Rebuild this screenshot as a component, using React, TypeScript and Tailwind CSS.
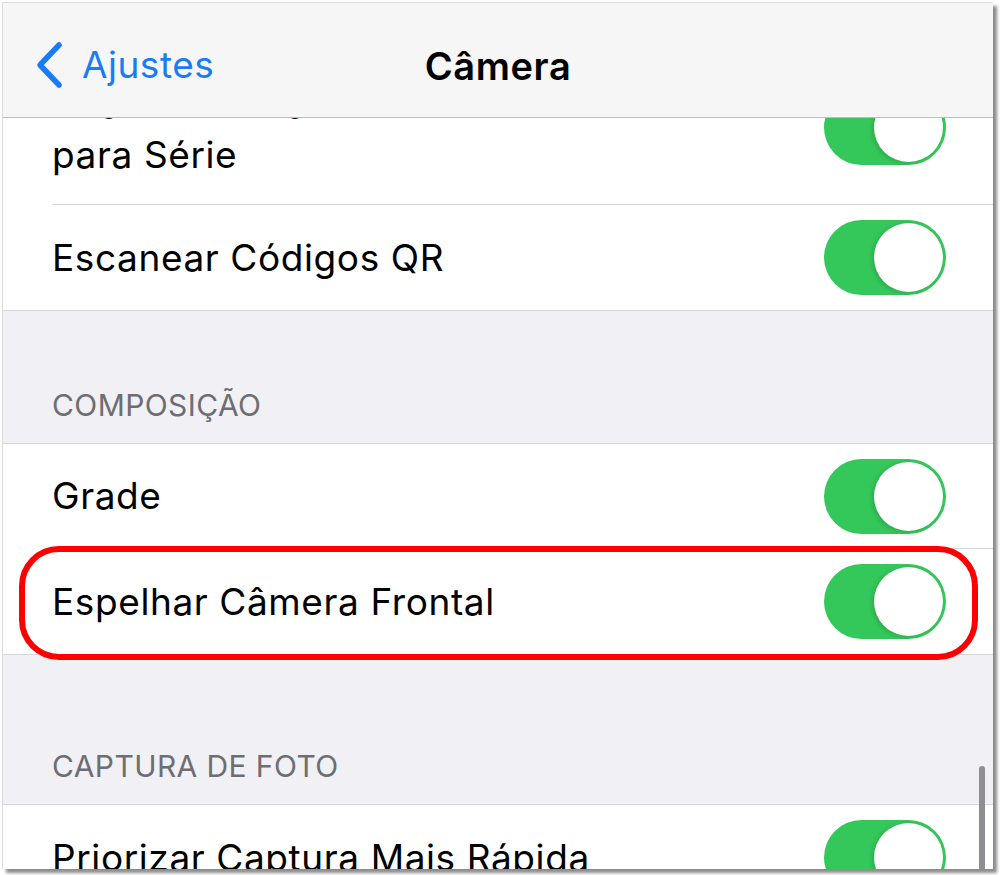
import React from 'react';

const Toggle: React.FC = () => (
  <div className="relative w-[122px] h-[75px] rounded-full bg-[#34c759] shrink-0">
    <div className="absolute right-[3px] top-[3px] w-[69px] h-[69px] rounded-full bg-white shadow-[-2px_1px_4px_rgba(0,0,0,0.15)]" />
  </div>
);

const Row: React.FC<{ children: React.ReactNode; last?: boolean; className?: string }> = ({ children, last, className }) => (
  <div className="pl-[49px] bg-white">
    <div className={`flex items-center justify-between pr-[47px] ${last ? '' : 'border-b border-[#d6d6da]'} ${className ?? 'h-[105px]'}`}>
      <div className="text-[37px] leading-[44px] tracking-[0.6px] text-black">{children}</div>
      <Toggle />
    </div>
  </div>
);

const SectionHeader: React.FC<{ title: string; height: string }> = ({ title, height }) => (
  <div className={`bg-[#f0f0f5] border-y border-[#d6d6da] flex items-end pl-[49px] pb-[15px] ${height}`}>
    <span className="text-[30px] text-[#6d6d72] tracking-[0.4px]">{title}</span>
  </div>
);

export default function App() {
  return (
    <div className="w-[1000px] h-[875px] bg-white" style={{ fontFamily: 'Inter, "Noto Sans", sans-serif' }}>
      <div className="relative ml-[2px] mt-[2px] w-[991px] h-[867px] border-l border-t border-[#dcdcdc] shadow-[4px_4px_3px_rgba(0,0,0,0.45)] overflow-hidden bg-[#f0f0f5] flex flex-col">
        {/* Nav bar */}
        <header className="h-[115px] shrink-0 bg-[#f6f6f6] border-b border-[#bdbdbd] flex items-center pt-[9px] relative z-10">
          <div className="flex items-center gap-[19px] pl-[30px] text-[#1a7cf5]">
            <svg width="30" height="48" viewBox="0 0 30 48" fill="none">
              <path d="M26 4 L7 24 L26 44" stroke="#1a7cf5" strokeWidth="5.5" strokeLinecap="round" strokeLinejoin="round" />
            </svg>
            <span className="text-[37px] tracking-[0.5px]">Ajustes</span>
          </div>
          <h1 className="absolute left-0 right-0 pt-[3px] text-center text-[38px] font-semibold tracking-[0.6px] text-black pointer-events-none">Câmera</h1>
        </header>

        {/* Scrolled list */}
        <main className="flex-1 overflow-hidden relative">
          <div className="-mt-[68px]">
            <Row className="h-[155px]">
              <div className="pt-[6px] leading-[50px]">
                <div>Usar Aumentar Volume</div>
                <div>para Série</div>
              </div>
            </Row>
            <Row last>Escanear Códigos QR</Row>
            <SectionHeader title="COMPOSIÇÃO" height="h-[134px]" />
            <Row>Grade</Row>
            <Row last>Espelhar Câmera Frontal</Row>
            <SectionHeader title="CAPTURA DE FOTO" height="h-[151px]" />
            <Row last>Priorizar Captura Mais Rápida</Row>
          </div>

          {/* Highlight */}
          <div className="absolute left-[16px] top-[428px] w-[959px] h-[114px] rounded-[40px] border-[6px] border-[#ff0000] pointer-events-none" />

          {/* Scroll indicator */}
          <div className="absolute right-[8px] top-[648px] w-[6px] h-[110px] rounded-full bg-[#8e8e93]" />
        </main>
      </div>
    </div>
  );
}
